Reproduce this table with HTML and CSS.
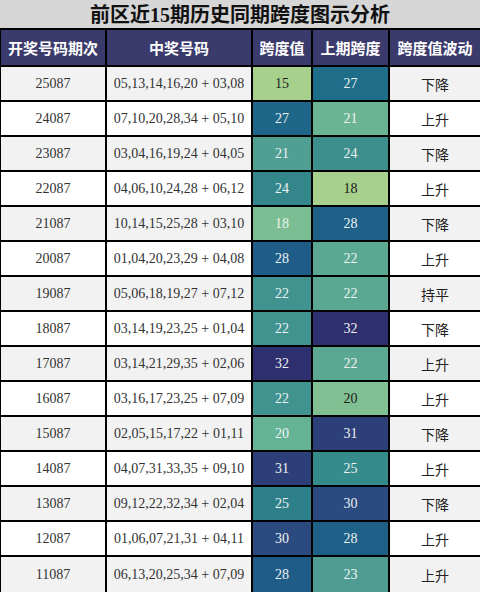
FILE: index.html
```html
<!DOCTYPE html>
<html lang="zh">
<head>
<meta charset="utf-8">
<title>前区近15期历史同期跨度图示分析</title>
<link rel="stylesheet" href="styles.css">
</head>
<body>
<div class="sheet">
  <div class="title">前区近15期历史同期跨度图示分析</div>
  <div class="grid">
    <div class="hd">开奖号码期次</div><div class="hd">中奖号码</div><div class="hd">跨度值</div><div class="hd">上期跨度</div><div class="hd">跨度值波动</div>

    <div class="c alt">25087</div><div class="c alt">05,13,14,16,20 + 03,08</div><div class="h h15 dark">15</div><div class="h u27">27</div><div class="c alt cj">下降</div>
    <div class="c">24087</div><div class="c">07,10,20,28,34 + 05,10</div><div class="h h27">27</div><div class="h u21">21</div><div class="c cj">上升</div>
    <div class="c alt">23087</div><div class="c alt">03,04,16,19,24 + 04,05</div><div class="h h21">21</div><div class="h u24">24</div><div class="c alt cj">下降</div>
    <div class="c">22087</div><div class="c">04,06,10,24,28 + 06,12</div><div class="h h24">24</div><div class="h u18 dark">18</div><div class="c cj">上升</div>
    <div class="c alt">21087</div><div class="c alt">10,14,15,25,28 + 03,10</div><div class="h h18">18</div><div class="h u28">28</div><div class="c alt cj">下降</div>
    <div class="c">20087</div><div class="c">01,04,20,23,29 + 04,08</div><div class="h h28">28</div><div class="h u22">22</div><div class="c cj">上升</div>
    <div class="c alt">19087</div><div class="c alt">05,06,18,19,27 + 07,12</div><div class="h h22">22</div><div class="h u22">22</div><div class="c alt cj">持平</div>
    <div class="c">18087</div><div class="c">03,14,19,23,25 + 01,04</div><div class="h h22">22</div><div class="h u32">32</div><div class="c cj">下降</div>
    <div class="c alt">17087</div><div class="c alt">03,14,21,29,35 + 02,06</div><div class="h h32">32</div><div class="h u22">22</div><div class="c alt cj">上升</div>
    <div class="c">16087</div><div class="c">03,16,17,23,25 + 07,09</div><div class="h h22">22</div><div class="h u20 dark">20</div><div class="c cj">上升</div>
    <div class="c alt">15087</div><div class="c alt">02,05,15,17,22 + 01,11</div><div class="h h20">20</div><div class="h u31">31</div><div class="c alt cj">下降</div>
    <div class="c">14087</div><div class="c">04,07,31,33,35 + 09,10</div><div class="h h31">31</div><div class="h u25">25</div><div class="c cj">上升</div>
    <div class="c alt">13087</div><div class="c alt">09,12,22,32,34 + 02,04</div><div class="h h25">25</div><div class="h u30">30</div><div class="c alt cj">下降</div>
    <div class="c">12087</div><div class="c">01,06,07,21,31 + 04,11</div><div class="h h30">30</div><div class="h u28">28</div><div class="c cj">上升</div>
    <div class="c alt">11087</div><div class="c alt">06,13,20,25,34 + 07,09</div><div class="h h28">28</div><div class="h u23">23</div><div class="c alt cj">上升</div>
  </div>
</div>
</body>
</html>
```
FILE: styles.css
```css
* { box-sizing: border-box; }
html, body { margin: 0; padding: 0; background: #f2f2f2; }
body { width: 480px; height: 592px; overflow: hidden; font-family: "Liberation Serif", "Noto Sans CJK SC", serif; }
.sheet { width: 480px; background: #000; padding-left: 1px; }
.title {
  height: 30px;
  background: #d6d6d6;
  border-bottom: 2px solid #000;
  margin-left: -1px;
  display: flex; align-items: center; justify-content: center;
  font-family: "Liberation Serif", "Noto Sans CJK SC", serif;
  font-weight: bold; font-size: 20px; color: #111;
  padding-bottom: 1px;
}
.grid {
  display: grid;
  grid-template-columns: 104px 144px 58px 75px 1fr;
  grid-template-rows: 35px repeat(14, 33px) 35px;
  column-gap: 2px; row-gap: 2px;
  background: #000;
}
.grid > div { display: flex; align-items: center; justify-content: center; }
.hd {
  background: #3b3a6d; color: #fff;
  font-family: "Noto Sans CJK SC", sans-serif; font-weight: bold; font-size: 15px;
}
.c { background: #fff; color: #333; font-size: 14px; }
.c.alt { background: #f2f2f2; }
.cj { font-family: "Noto Sans CJK SC", sans-serif; font-size: 14px; color: #222; }
.h { color: #eef2f2; font-size: 14px; }
.h.dark { color: #1a1a1a; }

.h15 { background: #a8d08d; }
.h18 { background: #7cbe93; }
.h20 { background: #63b394; }
.h21 { background: #4f9f92; }
.h22 { background: #40938f; }
.h24 { background: #33878a; }
.h25 { background: #2d8089; }
.h27 { background: #1f6788; }
.h28 { background: #1f5d88; }
.h30 { background: #2b4a7f; }
.h31 { background: #2d3f79; }
.h32 { background: #2d2f6e; }

.u18 { background: #a8d08d; }
.u20 { background: #80c093; }
.u21 { background: #6bb493; }
.u22 { background: #5aa892; }
.u23 { background: #4f9d92; }
.u24 { background: #3d8f8d; }
.u25 { background: #358a8c; }
.u27 { background: #1f6e89; }
.u28 { background: #1e6088; }
.u30 { background: #2b4a7f; }
.u31 { background: #2d3f79; }
.u32 { background: #2d2f6e; }
```
